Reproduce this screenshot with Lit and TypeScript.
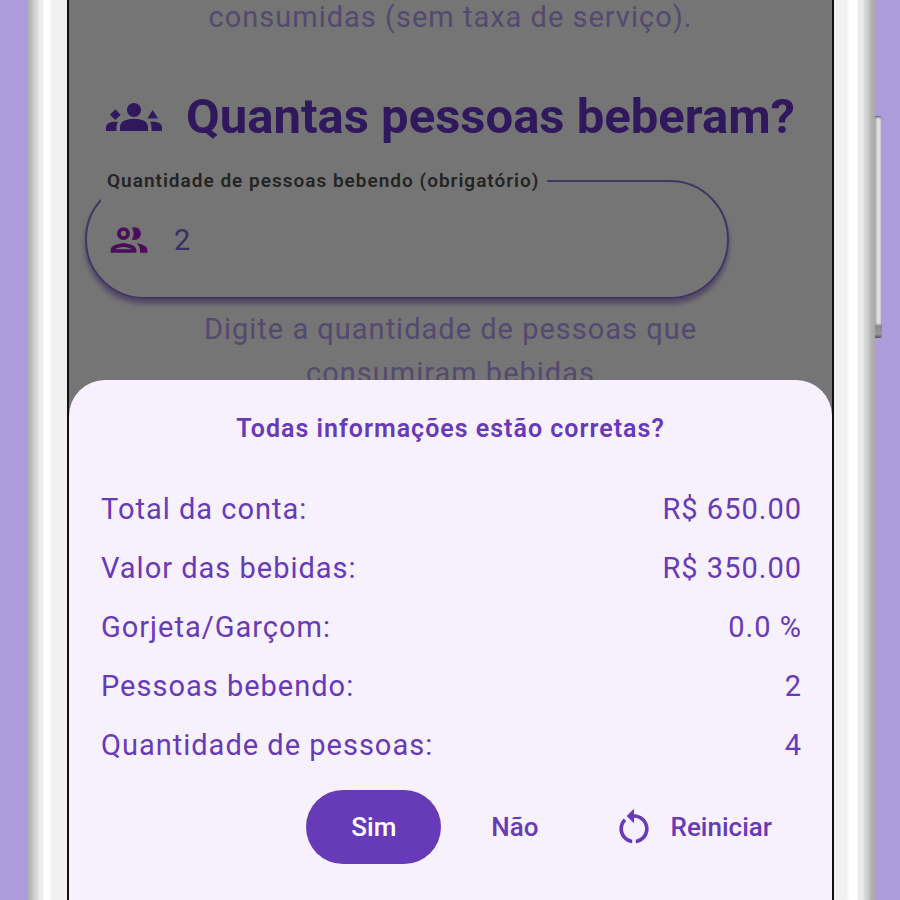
import { LitElement, html, css } from "lit";
import { customElement, state } from "lit/decorators.js";

interface SummaryRow {
  label: string;
  value: string;
}

@customElement("confirm-sheet")
export class ConfirmSheet extends LitElement {
  static styles = css`
    :host {
      display: block;
      box-sizing: border-box;
      padding: 33px 30px 36px;
      border-radius: 36px 36px 0 0;
      background: #f7f0fd;
      color: #673ab7;
    }
    .title {
      margin: 0 0 35px;
      font-size: 25px;
      line-height: 32px;
      font-weight: 600;
      letter-spacing: 1px;
      text-align: center;
    }
    .rows {
      margin: 0 0 15px;
      padding-left: 2px;
    }
    .row {
      display: flex;
      justify-content: space-between;
      font-size: 29px;
      line-height: 59px;
      letter-spacing: 1px;
    }
    .value {
      margin: 0;
    }
    .actions {
      display: flex;
      justify-content: flex-end;
      gap: 24px;
    }
    .action {
      display: flex;
      align-items: center;
      gap: 15px;
      height: 74px;
      padding: 0 26px;
      border: 0;
      border-radius: 37px;
      background: none;
      color: inherit;
      font: 500 26px/32px Roboto, sans-serif;
      cursor: pointer;
    }
    .primary {
      padding: 0 45px;
      background: #673ab7;
      color: #fff;
    }
    .with-icon {
      padding: 0 30px 0 23px;
    }
    .icon {
      width: 44px;
      height: 44px;
      fill: currentColor;
    }
  `;

  @state() private rows: SummaryRow[] = [
    { label: "Total da conta:", value: "R$ 650.00" },
    { label: "Valor das bebidas:", value: "R$ 350.00" },
    { label: "Gorjeta/Garçom:", value: "0.0 %" },
    { label: "Pessoas bebendo:", value: "2" },
    { label: "Quantidade de pessoas:", value: "4" },
  ];

  render() {
    return html`
      <h2 class="title">Todas informações estão corretas?</h2>
      <dl class="rows">
        ${this.rows.map(
          (r) => html`<div class="row"><dt>${r.label}</dt><dd class="value">${r.value}</dd></div>`
        )}
      </dl>
      <div class="actions">
        <button class="action primary" type="button">Sim</button>
        <button class="action" type="button">Não</button>
        <button class="action with-icon" type="button">
          <svg class="icon" viewBox="0 0 24 24" aria-hidden="true">
            <path d="M12 5V2L8 6l4 4V7c3.31 0 6 2.69 6 6 0 2.97-2.17 5.43-5 5.91v2.02c3.95-.49 7-3.85 7-7.93 0-4.42-3.58-8-8-8z" />
            <path d="M6 13c0-1.65.67-3.15 1.76-4.24L6.34 7.34C4.9 8.79 4 10.79 4 13c0 4.08 3.05 7.44 7 7.93v-2.02c-2.83-.48-5-2.94-5-5.91z" />
          </svg>
          Reiniciar
        </button>
      </div>
    `;
  }
}

@customElement("people-form")
export class PeopleForm extends LitElement {
  static styles = css`
    :host {
      display: block;
    }
    .form {
      margin-top: -5px;
    }
    .help {
      max-width: 560px;
      margin: 0 auto;
      color: #b8a0f0;
      font-size: 29px;
      line-height: 44px;
      letter-spacing: 1px;
      text-align: center;
    }
    .heading {
      display: flex;
      justify-content: center;
      align-items: center;
      gap: 24px;
      margin: 46px 0 11px;
      color: #6638c8;
      font-size: 49px;
      line-height: 64px;
      font-weight: 700;
      white-space: nowrap;
    }
    .groups {
      width: 56px;
      height: 56px;
      fill: currentColor;
    }
    .field {
      min-width: 0;
      margin: 0 103px 8px 16px;
      padding: 0 14px 20px;
      border: 2px solid #8a76d8;
      border-radius: 59px;
      box-shadow: 0 5px 5px #b39ddb;
    }
    .legend {
      padding: 0 8px 0 6px;
      color: #505050;
      font-size: 19px;
      line-height: 42px;
      font-weight: 600;
      letter-spacing: 1px;
    }
    .control {
      display: flex;
      align-items: center;
      gap: 23px;
      height: 75px;
      padding-left: 6px;
    }
    .people {
      flex: none;
      width: 44px;
      height: 44px;
      fill: #a31bc4;
    }
    .input {
      flex: 1;
      min-width: 0;
      padding: 0;
      border: 0;
      outline: 0;
      background: none;
      color: #8262dc;
      font: 400 29px/44px Roboto, sans-serif;
    }
  `;

  render() {
    return html`
      <div class="form">
        <p class="help">consumidas (sem taxa de serviço).</p>
        <h1 class="heading">
          <svg class="groups" viewBox="0 0 24 24" aria-hidden="true">
            <path d="M12 12.75c1.63 0 3.07.39 4.24.9 1.08.48 1.76 1.56 1.76 2.73V18H6v-1.61c0-1.18.68-2.26 1.76-2.73 1.17-.52 2.61-.91 4.24-.91zM5.13 14.1c-.37-.06-.74-.1-1.13-.1-.99 0-1.93.21-2.78.58C.48 14.9 0 15.62 0 16.43V18h4.5v-1.61c0-.83.23-1.61.63-2.29zM24 16.43c0-.81-.48-1.53-1.22-1.85-.85-.37-1.79-.58-2.78-.58-.39 0-.76.04-1.13.1.4.68.63 1.46.63 2.29V18H24zM12 6c1.66 0 3 1.34 3 3s-1.34 3-3 3-3-1.34-3-3 1.34-3 3-3zM1.7 11 4 8.7 6.3 11 4 13.3zM17.7 12.6 20 9l2.3 3.6z" />
          </svg>
          Quantas pessoas beberam?
        </h1>
        <fieldset class="field">
          <legend class="legend">
            <label for="people">Quantidade de pessoas bebendo (obrigatório)</label>
          </legend>
          <div class="control">
            <svg class="people" viewBox="0 0 24 24" aria-hidden="true">
              <path d="M9 13.75c-2.34 0-7 1.17-7 3.5V19h14v-1.75c0-2.33-4.66-3.5-7-3.5zM4.34 17c.84-.58 2.87-1.25 4.66-1.25s3.82.67 4.66 1.25H4.34zM9 12c1.93 0 3.5-1.57 3.5-3.5S10.93 5 9 5 5.5 6.57 5.5 8.5 7.07 12 9 12zm0-5c.83 0 1.5.67 1.5 1.5S9.83 10 9 10s-1.5-.67-1.5-1.5S8.17 7 9 7zm7.04 6.81c1.16.84 1.96 1.96 1.96 3.44V19h4v-1.75c0-2.02-3.5-3.17-5.96-3.44zM15 12c1.93 0 3.5-1.57 3.5-3.5S16.93 5 15 5c-.54 0-1.04.13-1.5.35.63.89 1 1.98 1 3.15s-.37 2.26-1 3.15c.46.22.96.35 1.5.35z" />
            </svg>
            <input class="input" id="people" type="text" inputmode="numeric" value="2" />
          </div>
        </fieldset>
        <p class="help">Digite a quantidade de pessoas que consumiram bebidas</p>
      </div>
    `;
  }
}

@customElement("app-root")
export class AppRoot extends LitElement {
  static styles = css`
    :host {
      display: flex;
      box-sizing: border-box;
      height: 100vh;
      padding: 0 25px 0 27px;
      overflow: hidden;
      background: #ae9bdb;
      font-family: Roboto, sans-serif;
    }
    .phone {
      position: relative;
      display: grid;
      grid-template-columns: 40px minmax(0, 1fr) 41px;
      flex: 1;
      min-width: 0;
    }
    .left {
      background: linear-gradient(to right, #a9aaa6, #b9bab7 4px, #cfcfcf 7px, #d9d9d9 10px, #f0f0f0 13px, #e9e9e9 15px, #fff 17px, #fff 22px, #f1f1f1 25px, #f1f1f1);
    }
    .right {
      background: linear-gradient(to left, #a8aaa6, #b4b5b2 4px, #cccccc 7px, #d8d8d8 10px, #ededed 13px, #e4e4e4 16px, #fff 18px, #fff 25px, #f1f1f1 29px, #f1f1f1);
    }
    .screen {
      position: relative;
      overflow: hidden;
      border: solid #111;
      border-width: 0 2px;
      background: #fff;
    }
    .scrim {
      position: absolute;
      inset: 0;
      background: rgba(0, 0, 0, 0.54);
    }
    .sheet {
      position: absolute;
      right: 0;
      bottom: 0;
      left: 0;
    }
    .power {
      position: absolute;
      top: 116px;
      right: -7px;
      width: 7px;
      height: 222px;
      border-radius: 0 3px 3px 0;
      background:
        linear-gradient(#666, transparent 3px, transparent 207px, #888 210px, #999 218px, #555),
        linear-gradient(to right, #aaa, #e4e4e4 3px, #dcdcdc 5px, #999);
    }
  `;

  render() {
    return html`
      <div class="phone">
        <div class="left"></div>
        <main class="screen">
          <people-form></people-form>
          <div class="scrim"></div>
          <confirm-sheet class="sheet" role="dialog"></confirm-sheet>
        </main>
        <div class="right"></div>
        <div class="power"></div>
      </div>
    `;
  }
}
